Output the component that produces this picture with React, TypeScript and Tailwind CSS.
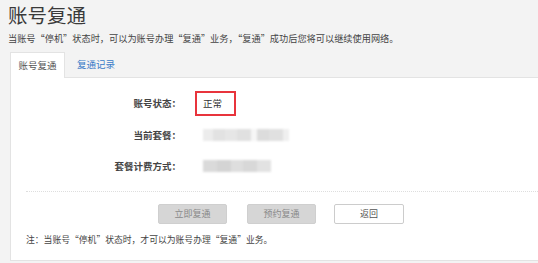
import React from "react";

const F = { fontFamily: '"Noto Sans CJK SC", "Noto Sans", sans-serif' };

function Blur({ blocks }: { blocks: [number, string][] }) {
  return (
    <div className="flex h-[12px] blur-[0.8px]">
      {blocks.map(([w, c], i) => (
        <div key={i} style={{ width: w, background: c }} className="h-full" />
      ))}
    </div>
  );
}

export default function App() {
  return (
    <div style={F} className="w-[538px] h-[263px] bg-[#f3f3f3] overflow-hidden text-[#333] flex flex-col">
      <div className="pl-[8px] pt-[3px] text-[19.5px] leading-[24px] text-[#3a3a3a]">账号复通</div>
      <div className="pl-[8px] mt-[4px] text-[9.2px] leading-[14px] text-[#444]">
        当账号“停机”状态时，可以为账号办理“复通”业务，“复通”成功后您将可以继续使用网络。
      </div>
      <div className="flex ml-[10px] mt-[6px] h-[26px] items-stretch">
        <div className="w-[55px] bg-white border border-[#e3e3e3] border-b-0 flex items-center justify-center text-[9.5px] text-[#555] relative top-[1px] z-10">
          账号复通
        </div>
        <div className="ml-[12px] flex items-center text-[9.5px] text-[#3a7bc8] pt-[1px]">复通记录</div>
      </div>
      <div className="ml-[10px] h-[184px] bg-white border border-[#e3e3e3] border-r-0 flex flex-col">
        <div className="flex items-center mt-[13px] h-[25px]">
          <div className="w-[170px] text-right text-[9.5px] font-bold text-[#444]">账号状态：</div>
          <div className="ml-[14px] w-[41px] h-[25px] border-2 border-[#e8343c] flex items-center pl-[6px] text-[9.5px] text-[#333]">
            正常
          </div>
        </div>
        <div className="flex items-center mt-[7px] h-[24px]">
          <div className="w-[170px] text-right text-[9.5px] font-bold text-[#444]">当前套餐：</div>
          <div className="ml-[22px]">
            <Blur
              blocks={[
                [10, "#ececec"],
                [12, "#e2e2e2"],
                [12, "#e6e6e6"],
                [14, "#e0e0e0"],
                [6, "#f6f6f6"],
                [12, "#dcdcdc"],
                [14, "#e0e0e0"],
                [6, "#efefef"],
              ]}
            />
          </div>
        </div>
        <div className="flex items-center mt-[7px] h-[24px]">
          <div className="w-[170px] text-right text-[9.5px] font-bold text-[#444]">套餐计费方式：</div>
          <div className="ml-[22px]">
            <Blur
              blocks={[
                [14, "#dadada"],
                [14, "#d4d4d4"],
                [12, "#dedede"],
                [14, "#d8d8d8"],
                [14, "#e2e2e2"],
              ]}
            />
          </div>
        </div>
        <div className="mt-[13px] ml-[15px] border-t border-dotted border-[#dedede]" />
        <div className="flex mt-[12px] h-[20px] ml-[147px] text-[9px]">
          <div className="w-[69px] rounded-[2px] bg-[#d6d6d6] border border-[#cfcfcf] flex items-center justify-center text-[#8a8a8a]">
            立即复通
          </div>
          <div className="ml-[20px] w-[69px] rounded-[2px] bg-[#d6d6d6] border border-[#cfcfcf] flex items-center justify-center text-[#8a8a8a]">
            预约复通
          </div>
          <div className="ml-[18px] w-[70px] rounded-[2px] bg-white border border-[#cccccc] flex items-center justify-center text-[#555]">
            返回
          </div>
        </div>
        <div className="ml-[15px] mt-[9px] text-[8.8px] leading-[14px] text-[#444]">
          注：当账号“停机”状态时，才可以为账号办理“复通”业务。
        </div>
      </div>
    </div>
  );
}
